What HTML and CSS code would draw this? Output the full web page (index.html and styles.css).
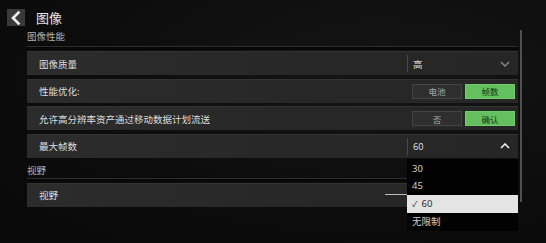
FILE: index.html
```html
<!DOCTYPE html>
<html lang="zh">
<head>
<meta charset="utf-8">
<link rel="stylesheet" href="styles.css">
</head>
<body>
<div class="screen">
  <header class="topbar">
    <div class="back">
      <svg width="18" height="16" viewBox="0 0 18 16"><path d="M11.5 2.5 L6 8 L11.5 13.5" fill="none" stroke="#f2f2f2" stroke-width="2.6" stroke-linecap="square"/></svg>
    </div>
    <div class="title">图像</div>
  </header>
  <div class="content">
    <div class="list">
      <div class="section">图像性能</div>
      <div class="sep"></div>
      <div class="rows">
        <div class="row">
          <span class="label">图像质量</span>
          <div class="select"><span>高</span>
            <svg class="chev" width="10" height="6" viewBox="0 0 10 6"><path d="M1 1 L5 5 L9 1" fill="none" stroke="#8a8a8a" stroke-width="1.4"/></svg>
          </div>
        </div>
        <div class="row">
          <span class="label">性能优化:</span>
          <div class="toggle"><span class="btn">电池</span><span class="btn on">帧数</span></div>
        </div>
        <div class="row">
          <span class="label">允许高分辨率资产通过移动数据计划流送</span>
          <div class="toggle"><span class="btn">否</span><span class="btn on">确认</span></div>
        </div>
        <div class="row open">
          <span class="label">最大帧数</span>
          <div class="select"><span class="val">60</span>
            <svg class="chev" width="10" height="6" viewBox="0 0 10 6"><path d="M1 5 L5 1 L9 5" fill="none" stroke="#f0f0f0" stroke-width="1.6"/></svg>
          </div>
          <ul class="menu">
            <li>30</li>
            <li>45</li>
            <li class="sel"><span class="tick">✓</span>60</li>
            <li>无限制</li>
          </ul>
        </div>
      </div>
      <div class="section sec2">视野</div>
      <div class="sep sep2"></div>
      <div class="row fov">
        <span class="label">视野</span>
        <div class="track"></div>
      </div>
    </div>
    <div class="scrollbar"></div>
  </div>
</div>
</body>
</html>
```
FILE: styles.css
```css
* { box-sizing: border-box; margin: 0; padding: 0; }
html, body { width: 546px; height: 243px; overflow: hidden; }
body {
  background: radial-gradient(ellipse at 70% 30%, #151515 0%, #0c0c0c 60%, #090909 100%);
  font-family: "Noto Sans CJK SC", "Noto Sans", sans-serif;
  color: #dcdcdc;
}
.screen { padding: 9px 0 0 7px; }
.topbar { display: flex; align-items: center; height: 17px; }
.back {
  width: 18px; height: 17px; background: #3a3a3a;
  display: flex; align-items: center; justify-content: center;
}
.title { margin-left: 11px; font-size: 13px; color: #e6e6e6; line-height: 17px; }
.content { display: flex; margin-left: 20px; }
.list { width: 491px; }
.scrollbar {
  width: 2px; height: 172px; background: #505050; margin-left: 2px; margin-top: 4px;
}
.section { font-size: 9.5px; color: #b4b4b4; line-height: 14px; margin-top: 3px; }
.sep {
  height: 4px; margin-top: 3px;
  border-top: 1px solid #2e2e2e;
  background: linear-gradient(#050505, #0a0a0a);
}
.rows { display: flex; flex-direction: column; gap: 3.6px; margin-top: 1px; }
.row {
  position: relative; height: 24px; display: flex; align-items: center;
  background: linear-gradient(90deg, #2c2c2c 0%, #272727 60%, #262626 100%);
  border-top: 1px solid #333;
}
.label { padding-left: 12px; font-size: 9.5px; color: #dedede; flex: 1; }
.select {
  width: 111px; height: 100%; display: flex; align-items: center;
  justify-content: space-between; padding: 0 8px 0 6px; font-size: 9.5px; color: #d8d8d8;
  position: relative;
}
.select::before {
  content: ""; position: absolute; left: 0; top: 3px; bottom: 3px; width: 1px; background: #4a4a4a;
}
.toggle { display: flex; gap: 3px; margin-right: 3px; }
.btn {
  width: 50px; height: 15px; display: flex; align-items: center; justify-content: center;
  font-size: 8.5px; color: #a8a8a8; background: #2f2f2f; border: 1px solid #444;
}
.btn.on { background: #64bf5e; color: #17321a; border-color: #6fcb69; }
.menu {
  list-style: none; position: absolute; left: 380px; top: 24px; width: 111px; height: 72px;
  background: #020202; padding-top: 1px; z-index: 2;
}
.menu li {
  height: 17.5px; line-height: 17.5px; padding-left: 5px; font-size: 9.5px; color: #cfcfcf;
  font-family: "Noto Sans", "Noto Sans CJK SC", sans-serif;
}
.menu li.sel { background: #e4e4e4; color: #2a2a2a; height: 18px; line-height: 18px; }
.tick { font-size: 8px; margin-right: 4px; }
.sec2 { margin-top: 5px; }
.sep2 { margin-top: 1px; }
.fov { margin-top: 1px; }
.track {
  position: absolute; left: 358px; right: 10px; top: 10px; height: 1px; background: #bdbdbd;
}
```
